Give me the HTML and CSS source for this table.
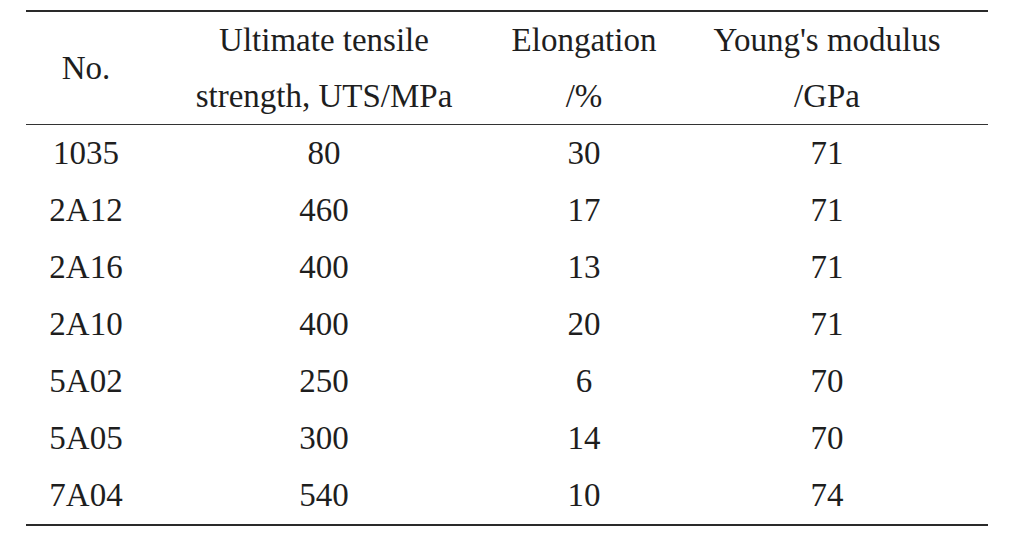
FILE: index.html
```html
<!DOCTYPE html>
<html>
<head>
<meta charset="utf-8">
<link rel="stylesheet" href="styles.css">
</head>
<body>
<table class="props">
  <colgroup>
    <col class="c-no">
    <col class="c-uts">
    <col class="c-el">
    <col class="c-ym">
  </colgroup>
  <thead>
    <tr>
      <th>No.</th>
      <th>Ultimate tensile<br>strength, UTS/MPa</th>
      <th>Elongation<br>/%</th>
      <th>Young's modulus<br>/GPa</th>
    </tr>
  </thead>
  <tbody>
    <tr><td>1035</td><td>80</td><td>30</td><td>71</td></tr>
    <tr><td>2A12</td><td>460</td><td>17</td><td>71</td></tr>
    <tr><td>2A16</td><td>400</td><td>13</td><td>71</td></tr>
    <tr><td>2A10</td><td>400</td><td>20</td><td>71</td></tr>
    <tr><td>5A02</td><td>250</td><td>6</td><td>70</td></tr>
    <tr><td>5A05</td><td>300</td><td>14</td><td>70</td></tr>
    <tr><td>7A04</td><td>540</td><td>10</td><td>74</td></tr>
  </tbody>
</table>
</body>
</html>
```
FILE: styles.css
```css
html, body {
  margin: 0;
  padding: 0;
  background: #ffffff;
}

body {
  padding: 10px 0 0 26px;
}

.props {
  border-collapse: collapse;
  table-layout: fixed;
  width: 962px;
  font-family: "Liberation Serif", "Times New Roman", serif;
  font-size: 33px;
  color: #1e1e1e;
  border-top: 2px solid #2a2a2a;
  border-bottom: 2px solid #2a2a2a;
}

.c-no { width: 120px; }
.c-uts { width: 356px; }
.c-el { width: 164px; }
.c-ym { width: 322px; }

.props th {
  font-weight: normal;
  line-height: 56px;
  padding: 0;
  text-align: center;
  vertical-align: middle;
  border-bottom: 1.5px solid #333333;
}

.props td {
  height: 57px;
  line-height: 57px;
  padding: 0;
  text-align: center;
  vertical-align: middle;
}
```
